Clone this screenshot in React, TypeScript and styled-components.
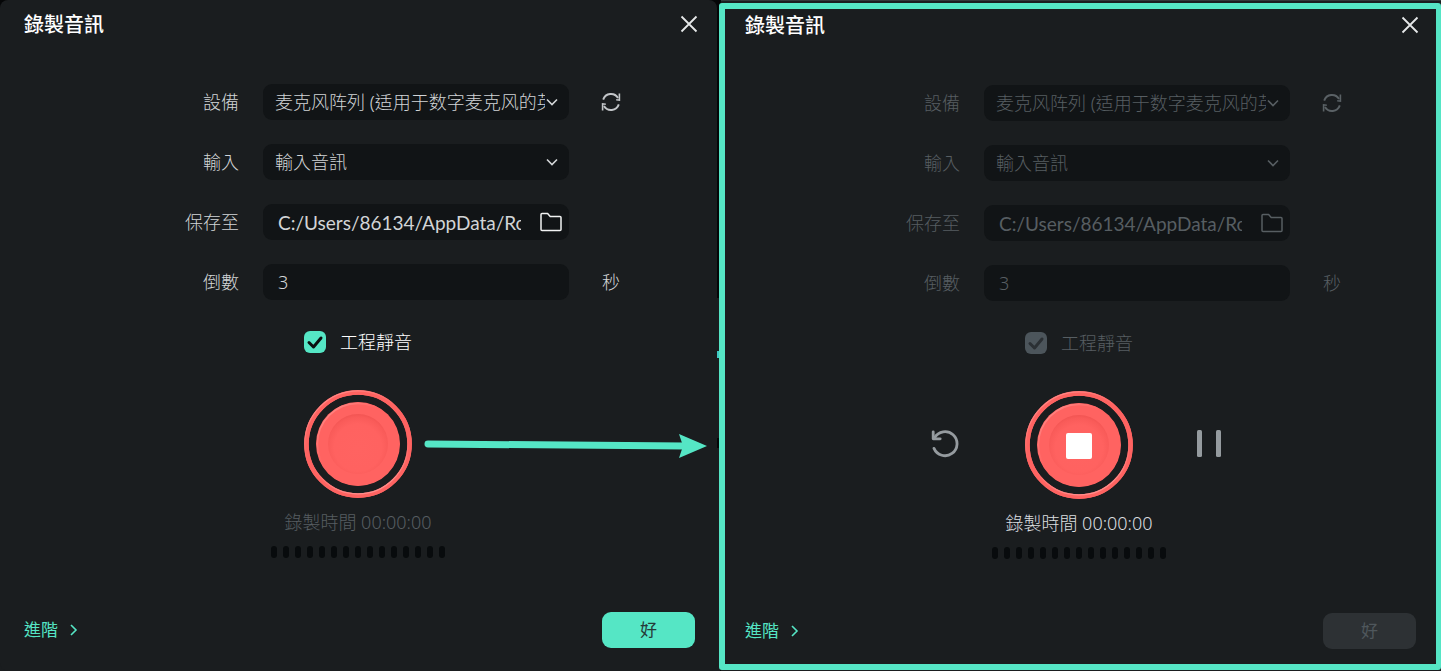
import React, { useId } from "react";
import styled, { createGlobalStyle, css } from "styled-components";

const GlobalStyle = createGlobalStyle`
  *, *::before, *::after { box-sizing: border-box; }
  body { margin: 0; background: #050607; }
  #root { min-height: 100vh; display: flex; }
  button, input, select { font: inherit; color: inherit; }
`;

const teal = "#55e6c5";
const muted = "#575e62";

const Page = styled.main`
  flex: 1;
  display: grid;
  grid-template-columns: 1fr 1fr;
  column-gap: 1px;
  min-height: 671px;
  font-family: "Noto Sans", "Noto Sans CJK TC", sans-serif;
  font-weight: 300;
  font-size: 18px;
  line-height: 24px;
  color: #d2d5d7;
`;

const Slot = styled.div<{ $framed?: boolean }>`
  position: relative;
  display: flex;
  ${(p) => p.$framed
    ? css`
        background: #1a1d1f;
        border-top: 1px solid #33383a;
        &::after {
          content: "";
          position: absolute;
          inset: 2px 0 1px -2px;
          border: 6px solid ${teal};
          border-right-width: 5px;
          border-radius: 3px;
          pointer-events: none;
        }
      `
    : css`
        padding-right: 3px;
        background:
          linear-gradient(#3fc9c4, #3fc9c4) right 351px / 3px 7px no-repeat,
          linear-gradient(#050607, #050607) right 438px / 3px 10px no-repeat,
          linear-gradient(#050607 298px, #1a1d1f 298px);
      `}
`;

const Panel = styled.section<{ $busy?: boolean }>`
  flex: 1;
  display: flex;
  flex-direction: column;
  background: #1a1d1f;
  border-radius: 8px;
  padding: 0 ${(p) => (p.$busy ? "4px 22px" : "1px 23px")} 0;
`;

const Header = styled.header`
  display: flex;
  justify-content: space-between;
  align-items: center;
  height: 48px;
  padding: 0 18px 0 24px;
`;

const Title = styled.h1`
  margin: 0;
  padding-top: 2px;
  font-size: 20px;
  line-height: 28px;
  font-weight: 500;
  color: #fff;
`;

const IconButton = styled.button<{ $tone?: string }>`
  display: flex;
  align-items: center;
  justify-content: center;
  border: 0;
  padding: 0;
  background: none;
  color: ${(p) => p.$tone ?? "inherit"};
`;

const Form = styled.div<{ $busy: boolean }>`
  display: grid;
  grid-template-columns: 144px 306px 44px;
  grid-auto-rows: 36px;
  column-gap: 24px;
  row-gap: 24px;
  justify-content: center;
  align-items: center;
  margin-top: 36px;
  padding-left: 16px;
  color: ${(p) => (p.$busy ? muted : "#d2d5d7")};
`;

const Label = styled.label`
  text-align: right;
`;

const Field = styled.div`
  display: flex;
  align-items: center;
  height: 36px;
  border-radius: 9px;
  background: #111416;
  position: relative;
`;

const Select = styled.select`
  appearance: none;
  width: 100%;
  height: 36px;
  border: 0;
  padding: 0 24px 0 12px;
  background: none;
  opacity: 1;
`;

const Chevron = styled.svg`
  position: absolute;
  right: 10px;
  top: 12px;
  pointer-events: none;
`;

const TextInput = styled.input`
  flex: 1;
  min-width: 0;
  height: 36px;
  border: 0;
  padding: 0;
  margin-left: 15px;
  background: none;
  font-family: Lato, sans-serif;
  font-weight: 400;
  font-size: 19px;
`;

const CountInput = styled(TextInput)`
  font-family: "Noto Sans", sans-serif;
  font-weight: 300;
  font-size: 18px;
`;

const FolderButton = styled(IconButton)`
  margin: 0 6px 0 18px;
`;

const Trailing = styled.div`
  display: flex;
  justify-content: center;
  width: 36px;
`;

const MuteRow = styled.label<{ $busy: boolean }>`
  display: flex;
  align-items: center;
  align-self: center;
  gap: 14px;
  height: 24px;
  margin-top: 30px;
  color: ${(p) => (p.$busy ? muted : "#fff")};
`;

const CheckWrap = styled.span`
  position: relative;
  display: flex;
`;

const Checkbox = styled.input`
  appearance: none;
  width: 22px;
  height: 22px;
  margin: 0;
  border-radius: 6px;
  background: ${teal};
  &:disabled { background: #4c555b; }
`;

const Tick = styled.svg`
  position: absolute;
  inset: 0;
  pointer-events: none;
`;

const Transport = styled.div`
  display: flex;
  align-items: center;
  justify-content: center;
  gap: 64px;
  margin-top: 36px;
`;

const Timer = styled.output<{ $busy: boolean }>`
  text-align: center;
  margin-top: 12px;
  color: ${(p) => (p.$busy ? "#dcdfe0" : muted)};
`;

const Meter = styled.div`
  display: flex;
  justify-content: center;
  gap: 6px;
  margin-top: 12px;
`;

const Led = styled.i`
  width: 6px;
  height: 12px;
  border-radius: 3px;
  background: #080b0d;
`;

const Footer = styled.footer`
  display: flex;
  align-items: center;
  justify-content: space-between;
  margin-top: auto;
  padding: 0 21px 0 24px;
  font-weight: 400;
  font-size: 17px;
`;

const MoreLink = styled.a`
  display: flex;
  align-items: center;
  gap: 11px;
  color: ${teal};
  text-decoration: none;
`;

const OkButton = styled.button`
  width: 93px;
  height: 36px;
  border: 0;
  border-radius: 9px;
  padding: 0;
  background: ${teal};
  color: #263a38;
  &:disabled { background: #2d3134; color: #4f575c; }
`;

const Arrow = styled.svg`
  position: absolute;
  left: calc(50% + 63px);
  top: 432px;
  pointer-events: none;
`;

function RecordGlyph({ stop }: { stop: boolean }) {
  const id = useId();
  return (
    <svg width="108" height="108" viewBox="0 0 108 108" aria-hidden="true">
      <defs>
        <linearGradient id={`${id}o`} x1="0.2" y1="0" x2="0.8" y2="1">
          <stop offset="0" stopColor="#ff8f8d" />
          <stop offset="0.4" stopColor="#ff6361" />
        </linearGradient>
        <linearGradient id={`${id}i`} x1="0.3" y1="0" x2="0.6" y2="1">
          <stop offset="0.6" stopColor="#ff6361" />
          <stop offset="1" stopColor="#ff8f8d" />
        </linearGradient>
        <linearGradient id={`${id}r`} x1="0" y1="0" x2="1" y2="1">
          <stop offset="0.1" stopColor="#ff8785" />
          <stop offset="0.4" stopColor="#ff6361" />
        </linearGradient>
        <radialGradient id={`${id}d`} cx="0.5" cy="0.56" r="0.58">
          <stop offset="0" stopColor="#ff6361" />
          <stop offset="0.68" stopColor="#ff6260" />
          <stop offset="0.88" stopColor="#f95b59" />
          <stop offset="1" stopColor="#ef5250" />
        </radialGradient>
      </defs>
      <circle cx="54" cy="54" r="51.6" fill="none" stroke="#ff6361" strokeWidth="4.6" />
      <circle cx="54" cy="54" r="53.2" fill="none" stroke={`url(#${id}o)`} strokeWidth="1.2" />
      <circle cx="54" cy="54" r="49.9" fill="none" stroke={`url(#${id}i)`} strokeWidth="1.2" />
      <circle cx="54" cy="54" r="42" fill="#ff6361" />
      <circle cx="54" cy="54" r="40.6" fill="none" stroke={`url(#${id}r)`} strokeWidth="1.6" />
      <circle cx="54" cy="54" r="30" fill={`url(#${id}d)`} />
      {stop && <rect x="41" y="42" width="26" height="26" rx="2" fill="#fff" />}
    </svg>
  );
}

function ChevronDown() {
  return (
    <Chevron width="14" height="12" viewBox="0 0 14 12" fill="none" stroke="currentColor" strokeWidth="1.6" aria-hidden="true">
      <path d="M2 3.5l5 5 5-5" />
    </Chevron>
  );
}

function Recorder({ busy = false }: { busy?: boolean }) {
  const id = useId();
  return (
    <Panel $busy={busy}>
      <Header>
        <Title>錄製音訊</Title>
        <IconButton aria-label="關閉" $tone="#e6e8e9">
          <svg width="18" height="18" viewBox="0 0 18 18" fill="none" stroke="currentColor" strokeWidth="1.8">
            <path d="M1.5 1.5l15 15M16.5 1.5l-15 15" />
          </svg>
        </IconButton>
      </Header>

      <Form $busy={busy}>
        <Label htmlFor={`${id}device`}>設備</Label>
        <Field>
          <Select id={`${id}device`} disabled={busy}>
            <option>麦克风阵列 (适用于数字麦克风的英特尔</option>
          </Select>
          <ChevronDown />
        </Field>
        <Trailing>
          <IconButton aria-label="重新整理" disabled={busy} $tone={busy ? "#5a6165" : "#c3c6c9"}>
            <svg width="20" height="20" viewBox="0 0 20 20" fill="none" stroke="currentColor" strokeWidth="1.9">
              <path d="M2.2 7.6A8.2 8.2 0 0 1 17 6M17.8 12.4A8.2 8.2 0 0 1 3 14" />
              <path d="M18.4 1.6v6.6l-3.2-.4M1.6 18.4v-6.6l3.2.4" strokeWidth="1.6" />
            </svg>
          </IconButton>
        </Trailing>

        <Label htmlFor={`${id}input`}>輸入</Label>
        <Field>
          <Select id={`${id}input`} disabled={busy}>
            <option>輸入音訊</option>
          </Select>
          <ChevronDown />
        </Field>
        <span />

        <Label htmlFor={`${id}path`}>保存至</Label>
        <Field>
          <TextInput id={`${id}path`} disabled={busy} defaultValue="C:/Users/86134/AppData/Roaming" />
          <FolderButton aria-label="選擇資料夾" disabled={busy} $tone={busy ? muted : "#f2f3f3"}>
            <svg width="24" height="20" viewBox="0 0 24 20" fill="none" stroke="currentColor" strokeWidth="1.5" strokeLinejoin="round">
              <path d="M2 17.5V2.5Q2 1.5 3 1.5H8.6L11.2 4.5H21Q22 4.5 22 5.5V17.5Q22 18.5 21 18.5H3Q2 18.5 2 17.5Z" />
            </svg>
          </FolderButton>
        </Field>
        <span />

        <Label htmlFor={`${id}count`}>倒數</Label>
        <Field>
          <CountInput id={`${id}count`} disabled={busy} defaultValue="3" />
        </Field>
        <Trailing>秒</Trailing>
      </Form>

      <MuteRow $busy={busy}>
        <CheckWrap>
          <Checkbox type="checkbox" defaultChecked disabled={busy} />
          <Tick width="22" height="22" viewBox="0 0 22 22" fill="none" stroke={busy ? "#2b3034" : "#0b0f10"} strokeWidth="3" strokeLinecap="round" strokeLinejoin="round">
            <path d="M5 11.5l4.5 4.5L17 7" />
          </Tick>
        </CheckWrap>
        工程靜音
      </MuteRow>

      <Transport>
        {busy && (
          <IconButton aria-label="重新錄製" $tone="#959b9f">
            <svg width="30" height="30" viewBox="0 0 30 30" fill="none" stroke="currentColor" strokeWidth="2.8" strokeLinecap="round" strokeLinejoin="round">
              <path d="M3.6 7.8A12 12 0 1 1 3 18.4" />
              <path d="M2.2 1.8v7h7" />
            </svg>
          </IconButton>
        )}
        <IconButton aria-label={busy ? "停止" : "錄製"}>
          <RecordGlyph stop={busy} />
        </IconButton>
        {busy && (
          <IconButton aria-label="暫停" $tone="#959b9f">
            <svg width="30" height="30" viewBox="0 0 30 30" fill="currentColor">
              <rect x="0" y="0" width="5" height="27" rx="1.5" />
              <rect x="19" y="0" width="5" height="27" rx="1.5" />
            </svg>
          </IconButton>
        )}
      </Transport>

      <Timer $busy={busy}>錄製時間 00:00:00</Timer>
      <Meter>
        {Array.from({ length: 15 }, (_, i) => (
          <Led key={i} />
        ))}
      </Meter>

      <Footer>
        <MoreLink href="#advanced">
          進階
          <svg width="10" height="12" viewBox="0 0 10 12" fill="none" stroke="currentColor" strokeWidth="1.6">
            <path d="M2 1l5 5-5 5" />
          </svg>
        </MoreLink>
        <OkButton disabled={busy}>好</OkButton>
      </Footer>
    </Panel>
  );
}

export default function App() {
  return (
    <>
      <GlobalStyle />
      <Page>
        <Slot>
          <Recorder />
          <Arrow width="286" height="28" viewBox="0 0 286 28" aria-hidden="true">
            <path d="M5 12L262 14" stroke={teal} strokeWidth="7" strokeLinecap="round" />
            <path d="M256 2L284 14L256 26L260 14Z" fill={teal} />
          </Arrow>
        </Slot>
        <Slot $framed>
          <Recorder busy />
        </Slot>
      </Page>
    </>
  );
}
